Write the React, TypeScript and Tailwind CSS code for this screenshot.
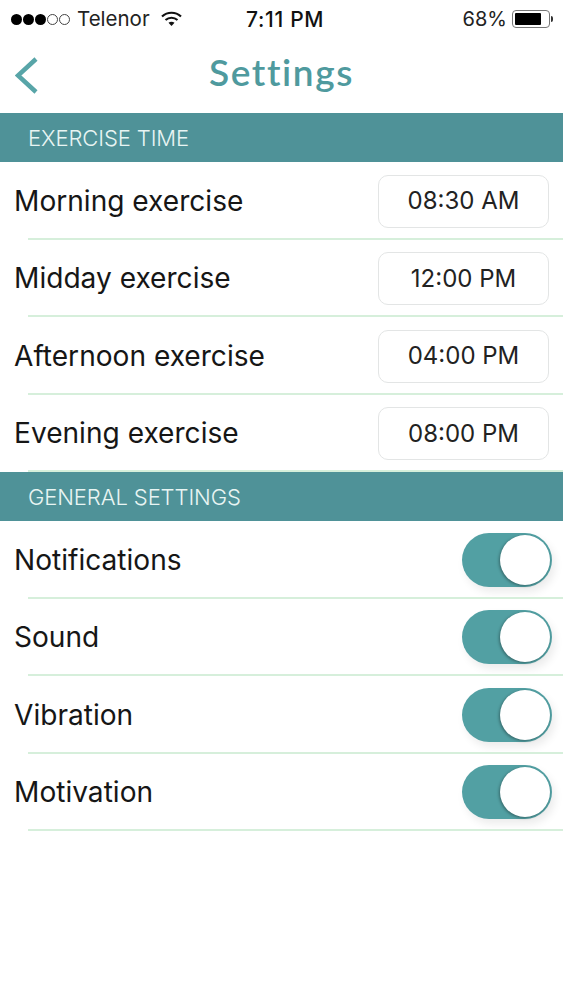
const sans = "font-['Inter','Liberation_Sans',sans-serif]";

const times = [
  { label: "Morning exercise", value: "08:30 AM" },
  { label: "Midday exercise", value: "12:00 PM" },
  { label: "Afternoon exercise", value: "04:00 PM" },
  { label: "Evening exercise", value: "08:00 PM" },
];

const toggles = ["Notifications", "Sound", "Vibration", "Motivation"];

function StatusBar() {
  return (
    <div className="h-[38px] relative flex items-center justify-between pl-[11px] pr-[10px] text-[#222]">
      <div className="flex items-center">
        <div className="flex gap-[1px]">
          {[0, 1, 2].map((i) => (
            <span key={i} className="w-[11px] h-[11px] rounded-full bg-black" />
          ))}
          {[0, 1].map((i) => (
            <span key={i} className="w-[11px] h-[11px] rounded-full border border-[#444]" />
          ))}
        </div>
        <span className="ml-[7px] text-[20.5px] leading-none">Telenor</span>
        <svg className="ml-[11px]" width="21" height="16" viewBox="0 0 21 16" fill="none" stroke="#111" strokeWidth="2.2">
          <path d="M1 5.5C6.5 0.5 14.5 0.5 20 5.5" />
          <path d="M4.5 9C8 6 13 6 16.5 9" />
          <path d="M10.5 15L7.5 11.8C9.2 10.5 11.8 10.5 13.5 11.8Z" fill="#111" stroke="none" />
        </svg>
      </div>
      <span className="absolute left-[246px] top-[8px] text-[21px] leading-[23px] font-medium tracking-[0.7px] text-[#111]">7:11 PM</span>
      <div className="flex items-center">
        <span className="text-[20px] leading-none">68%</span>
        <div className="ml-[5px] w-[38px] h-[18px] rounded-[4px] border border-[#777] p-[2px]">
          <div className="w-[26px] h-full rounded-[1px] bg-black" />
        </div>
        <span className="ml-[1px] w-[2px] h-[6px] rounded-r-full bg-[#333]" />
      </div>
    </div>
  );
}

function SectionHeader({ title }: { title: string }) {
  return (
    <div className="h-[49px] bg-[#4f9298] flex items-center pl-[28px] pt-[2px] text-[22px] font-light tracking-[-0.1px] text-[#e8f5f3]">
      {title}
    </div>
  );
}

function Row({ label, children }: { label: string; children: React.ReactNode }) {
  return (
    <div className="h-[77.5px] relative flex items-center justify-between pl-[15px] pr-[14px]">
      <span className="text-[28.1px] leading-none text-[#161616] -ml-[1px]">{label}</span>
      {children}
      <div className="absolute left-[28px] right-0 bottom-0 h-[2px] bg-[#d6efdb]" />
    </div>
  );
}

function Toggle() {
  return (
    <div className="w-[90px] h-[54px] rounded-full bg-[#52a0a3] relative mr-[-3px] shadow-[3px_5px_8px_rgba(0,0,0,0.08)]">
      <div className="absolute right-[2px] top-[2px] w-[50px] h-[50px] rounded-full bg-white shadow-[-1px_1px_3px_rgba(0,0,0,0.35)]" />
    </div>
  );
}

export default function App() {
  return (
    <div className={`min-h-[1000px] bg-white ${sans}`}>
      <StatusBar />
      <div className="h-[75px] relative flex items-center justify-center">
        <svg className="absolute left-[15px] top-[19px]" width="23" height="37" viewBox="0 0 23 37" fill="none" stroke="#58a5a8" strokeWidth="4.5">
          <path d="M21 2L3 18.5L21 35" />
        </svg>
        <h1 className="text-[37px] font-semibold font-['Lato',sans-serif] tracking-[1.6px] text-[#4f9a9e] -mt-[8px]">Settings</h1>
      </div>
      <SectionHeader title="EXERCISE TIME" />
      {times.map((t) => (
        <Row key={t.label} label={t.label}>
          <div className="w-[171px] h-[53px] mt-[1px] rounded-[10px] border border-[#e3e5e5] flex items-center justify-center text-[24px] text-[#222]">
            {t.value}
          </div>
        </Row>
      ))}
      <SectionHeader title="GENERAL SETTINGS" />
      {toggles.map((t) => (
        <Row key={t} label={t}>
          <Toggle />
        </Row>
      ))}
    </div>
  );
}
